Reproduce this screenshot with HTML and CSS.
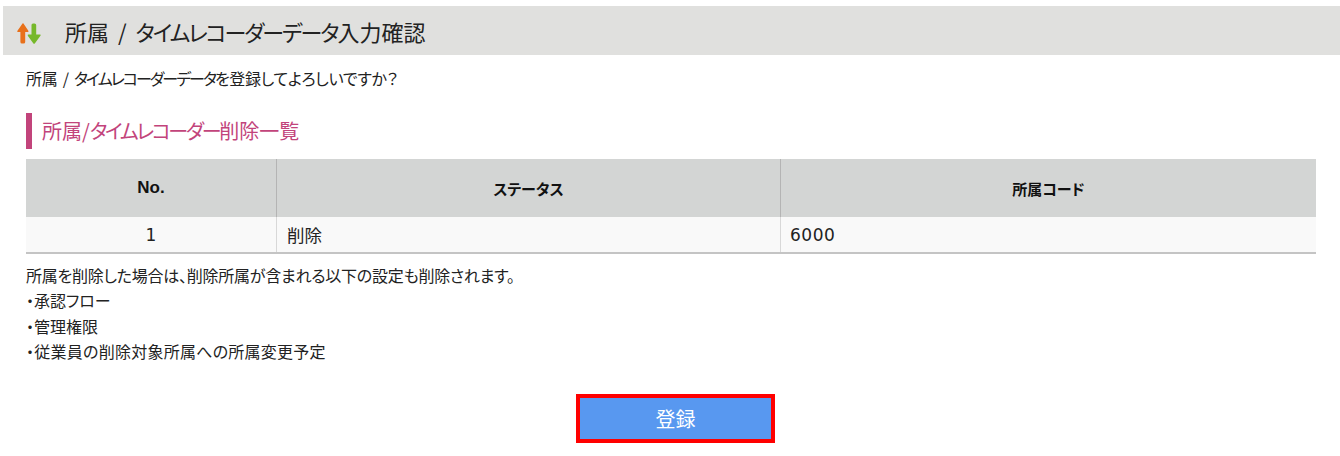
FILE: index.html
```html
<!DOCTYPE html>
<html lang="ja">
<head>
    <meta charset="UTF-8">
    <meta name="viewport" content="width=device-width, initial-scale=1.0">
    <title>所属 / タイムレコーダーデータ入力確認</title>
    <link rel="stylesheet" href="styles.css">
</head>
<body>
    <div class="page-title">
        <svg class="title-icon" width="24" height="21" viewBox="0 0 24 21">
            <path d="M5.5 .5 Q6 0 6.5 .5 L11.5 8 Q11.6 9 11 9 H8.2 V19 Q8.2 20.5 6.5 20.5 H5 Q3.4 20.5 3.4 19 V9 H.8 Q0 9 .3 8 Z" fill="#e8701a"/>
            <path d="M14.5 2 Q14.5 .5 16 .5 H17.5 Q19.2 .5 19.2 2 V11.5 H23 Q24 11.5 23.6 12.5 L17.8 20.5 Q17 21 16.4 20.5 L10.8 12.8 Q10.4 11.5 11.4 11.5 H14.5 Z" fill="#76b82a"/>
        </svg>
        <h1>所属 / <span class="kana">タイムレコーダーデータ</span>入力確認</h1>
    </div>
    <div class="content">
        <p class="lead">所属 / <span class="kana">タイムレコーダーデータ</span>を登録してよろしいですか？</p>
        <h2 class="section-title">所属/<span class="kana">タイムレコーダー</span>削除一覧</h2>
        <table class="list">
            <thead>
                <tr>
                    <th class="col-no">No.</th>
                    <th class="col-status">ステータス</th>
                    <th>所属コード</th>
                </tr>
            </thead>
            <tbody>
                <tr>
                    <td class="num">1</td>
                    <td class="word">削除</td>
                    <td class="num-left">6000</td>
                </tr>
            </tbody>
        </table>
        <div class="notes">
            <p class="note-main">所属を削除した場合は、削除所属が含まれる以下の設定も削除されます。</p>
            <p>・承認フロー</p>
            <p>・管理権限</p>
            <p class="note-wide">・従業員の削除対象所属への所属変更予定</p>
        </div>
        <div class="actions">
            <button class="btn-submit" type="button">登録</button>
        </div>
    </div>
</body>
</html>
```

FILE: styles.css
```css
html, body {
    margin: 0;
    padding: 0;
}
body {
    background-color: #fff;
    color: #222;
    font-family: "Noto Sans CJK JP", "Liberation Sans", sans-serif;
    font-size: 16px;
    font-feature-settings: "palt";
    overflow: hidden;
}
.page-title {
    display: flex;
    align-items: center;
    height: 49px;
    margin: 6px 0 0 3px;
    padding-left: 14px;
    background-color: #e0e0de;
}
.title-icon {
    flex: none;
    margin-top: 5px;
}
.page-title h1 {
    margin: 0 0 0 24px;
    font-size: 22px;
    font-weight: 400;
    word-spacing: 4px;
    color: #222;
}
.page-title .kana {
    letter-spacing: -2px;
}
.content {
    padding: 0 24px 0 26px;
}
.lead {
    margin: 12px 0 0;
    line-height: 22px;
    word-spacing: 2px;
    letter-spacing: -.3px;
}
.lead .kana {
    letter-spacing: -2px;
}
.section-title {
    margin: 24px 0 10px;
    padding-left: 10px;
    height: 36px;
    line-height: 36px;
    border-left: 6px solid #c2447b;
    color: #c2447b;
    font-size: 20px;
    font-weight: 400;
}
.section-title .kana {
    letter-spacing: -2.3px;
}
.list {
    width: 100%;
    border-collapse: collapse;
    table-layout: fixed;
    border-bottom: 2px solid #c4c4c4;
}
.list th {
    height: 58px;
    padding: 0;
    background-color: #d3d5d4;
    border-left: 1px solid #b4b4b4;
    font-size: 15px;
    font-weight: 700;
    color: #111;
}
.list th:first-child {
    border-left: 0;
}
.list th.col-no {
    width: 250px;
    font-family: "Liberation Sans", sans-serif;
    font-size: 17px;
}
.list .col-status {
    width: 503px;
}
.list td {
    height: 35px;
    padding: 0 9px;
    background-color: #f9f9f9;
    border-left: 1px solid #d8d8d8;
    line-height: 20px;
}
.list td:first-child {
    border-left: 0;
}
.list td.word {
    font-size: 17.5px;
    padding-left: 10px;
}
.list td.num {
    height: 34px;
    padding-top: 1px;
    text-align: center;
    font-family: "DejaVu Sans", sans-serif;
    font-size: 17px;
}
.list td.num-left {
    height: 34px;
    padding-top: 1px;
    font-family: "DejaVu Sans", sans-serif;
    font-size: 17px;
    letter-spacing: .5px;
}
.notes {
    margin-top: 9px;
}
.notes p {
    margin: 0;
    line-height: 25.3px;
}
.notes .note-main {
    letter-spacing: -.25px;
}
.notes .note-wide {
    letter-spacing: .25px;
}
.actions {
    display: flex;
    justify-content: center;
    margin-top: 30px;
    padding-left: 9px;
}
.btn-submit {
    width: 199px;
    height: 49px;
    background-color: #5898f0;
    border: 4px solid #f00;
    color: #fff;
    font-family: inherit;
    font-size: 20px;
}
```
